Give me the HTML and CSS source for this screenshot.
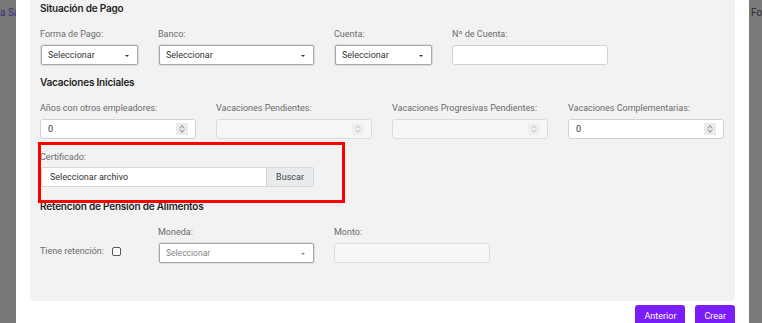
FILE: index.html
```html
<!DOCTYPE html>
<html lang="es">
<head>
    <meta charset="UTF-8">
    <meta name="viewport" content="width=device-width, initial-scale=1.0">
    <title>Nuevo Empleado</title>
    <link rel="stylesheet" href="styles.css">
</head>
<body>
    <div class="screen">
        <!-- pagina de fondo (oscurecida) -->
        <div class="page-left"><span>a Sa</span></div>

        <div class="modal">
            <div class="panel">
                <h3>Situación de Pago</h3>
                <div class="row">
                    <div class="field col-2">
                        <label>Forma de Pago:</label>
                        <div class="select">Seleccionar</div>
                    </div>
                    <div class="field col-3">
                        <label>Banco:</label>
                        <div class="select">Seleccionar</div>
                    </div>
                    <div class="field col-2">
                        <label>Cuenta:</label>
                        <div class="select">Seleccionar</div>
                    </div>
                    <div class="field col-3">
                        <label>Nº de Cuenta:</label>
                        <div class="input"></div>
                    </div>
                </div>

                <h3>Vacaciones Iniciales</h3>
                <div class="row">
                    <div class="field col-3">
                        <label>Años con otros empleadores:</label>
                        <div class="input number">0<span class="spin"></span></div>
                    </div>
                    <div class="field col-3">
                        <label>Vacaciones Pendientes:</label>
                        <div class="input number disabled"><span class="spin"></span></div>
                    </div>
                    <div class="field col-3">
                        <label>Vacaciones Progresivas Pendientes:</label>
                        <div class="input number disabled"><span class="spin"></span></div>
                    </div>
                    <div class="field col-3">
                        <label>Vacaciones Complementarias:</label>
                        <div class="input number">0<span class="spin"></span></div>
                    </div>
                </div>

                <div class="row certificado">
                    <div class="field col-file">
                        <label>Certificado:</label>
                        <div class="file">
                            <span class="file-name">Seleccionar archivo</span>
                            <span class="file-btn">Buscar</span>
                        </div>
                    </div>
                    <div class="highlight"></div>
                </div>

                <h3>Retención de Pensión de Alimentos</h3>
                <div class="row">
                    <div class="field col-2 check-field">
                        <span class="check-label">Tiene retención:</span>
                        <span class="checkbox"></span>
                    </div>
                    <div class="field col-3">
                        <label>Moneda:</label>
                        <div class="select placeholder">Seleccionar</div>
                    </div>
                    <div class="field col-3">
                        <label>Monto:</label>
                        <div class="input disabled"></div>
                    </div>
                </div>
            </div>

            <div class="footer">
                <button class="btn">Anterior</button>
                <button class="btn">Crear</button>
            </div>
        </div>

        <div class="page-right"><span>Fo</span></div>
    </div>
</body>
</html>
```

FILE: styles.css
```css
body {
    margin: 0;
    background-color: #777;
    font-family: Roboto, "Liberation Sans", sans-serif;
    overflow: hidden;
}

.screen {
    display: flex;
    height: 323px;
}

.page-left {
    width: 16px;
    background-color: #787878;
    overflow: hidden;
    white-space: nowrap;
    font-size: 10px;
    color: #3d2a86;
    padding-top: 7px;
}

.page-right {
    flex: 1;
    background-color: #7a7a7a;
    overflow: hidden;
    white-space: nowrap;
    font-size: 10px;
    color: #2c2c2c;
    padding: 7px 0 0 2px;
}

.modal {
    width: 733px;
    background: white;
    padding: 0 14px;
    box-sizing: border-box;
}

.panel {
    background-color: #f2f2f2;
    height: 301px;
    padding: 0 10px;
    border-radius: 0 0 4px 4px;
}

h3 {
    font-family: Inter, Roboto, sans-serif;
    font-size: 10px;
    font-weight: 600;
    color: #1f1f1f;
    line-height: 16px;
    margin: 0 0 11px;
    letter-spacing: -0.2px;
}

.row {
    display: flex;
    gap: 20px;
    margin-bottom: 9px;
}

.col-2 {
    width: 98px;
}

.col-3 {
    width: 156px;
}

.col-file {
    width: 274px;
}

label,
.check-label {
    display: block;
    font-size: 9px;
    line-height: 14px;
    color: #6b6b6b;
    margin-bottom: 4px;
    white-space: nowrap;
}

.select {
    position: relative;
    height: 20px;
    box-sizing: border-box;
    background: white;
    border: 1px solid #a9a9a9;
    box-shadow: 0 0 0 1px #dcdcdc;
    border-radius: 2px;
    font-size: 9px;
    line-height: 18px;
    padding-left: 6px;
    color: #333;
    margin-left: 1px;
}

.select::after {
    content: "";
    position: absolute;
    right: 8px;
    top: 9px;
    border-left: 2px solid transparent;
    border-right: 2px solid transparent;
    border-top: 2px solid #333;
}

.select.placeholder {
    color: #888;
    font-size: 8.5px;
}

.select.placeholder::after {
    border-top-color: #888;
}

.input {
    position: relative;
    height: 20px;
    box-sizing: border-box;
    background: white;
    border: 1px solid #d2d2d2;
    border-radius: 3px;
    font-size: 9px;
    line-height: 18px;
    padding-left: 7px;
    color: #333;
}

.input.disabled {
    background-color: #f7f7f7;
    border-color: #dcdcdc;
}

.spin {
    position: absolute;
    right: 7px;
    top: 3px;
    width: 12px;
    height: 12px;
    background-color: #ececec;
}

.spin::before,
.spin::after {
    content: "";
    position: absolute;
    left: 4px;
    width: 3px;
    height: 3px;
    border-left: 1px solid #999;
    border-top: 1px solid #999;
}

.spin::before {
    top: 3px;
    transform: rotate(45deg);
}

.spin::after {
    top: 5px;
    transform: rotate(225deg);
}

.disabled .spin {
    background-color: #f0f0f0;
}

.disabled .spin::before,
.disabled .spin::after {
    border-color: #ccc;
}

.certificado {
    position: relative;
    margin-top: 11px;
    margin-bottom: 11px;
}

.certificado label {
    margin-bottom: 3px;
}

.file {
    display: flex;
    height: 20px;
    box-sizing: border-box;
    border: 1px solid #d6d6d6;
    border-radius: 2px;
    background: white;
    font-size: 9px;
    line-height: 18px;
    margin-left: 1px;
}

.file-name {
    flex: 1;
    padding-left: 8px;
    color: #333;
}

.file-btn {
    width: 46px;
    text-align: center;
    background-color: #e9ecef;
    border-left: 1px solid #d6d6d6;
    color: #444;
}

.highlight {
    position: absolute;
    left: -2px;
    top: -8px;
    width: 307px;
    height: 61px;
    border: 3px solid #ff0000;
    box-sizing: border-box;
}

.check-field {
    display: flex;
    align-items: center;
    padding-top: 14px;
}

.check-label {
    margin: 0 8px 0 0;
}

.checkbox {
    width: 7px;
    height: 7px;
    border: 1px solid #555;
    border-radius: 2px;
    background: white;
}

.footer {
    display: flex;
    justify-content: flex-end;
    gap: 10px;
    padding-top: 4px;
}

.btn {
    background-color: #7a1dfb;
    color: white;
    border: none;
    border-radius: 3px;
    font-family: Roboto, sans-serif;
    font-size: 9px;
    height: 22px;
    padding: 0 9px;
    cursor: pointer;
}
```
